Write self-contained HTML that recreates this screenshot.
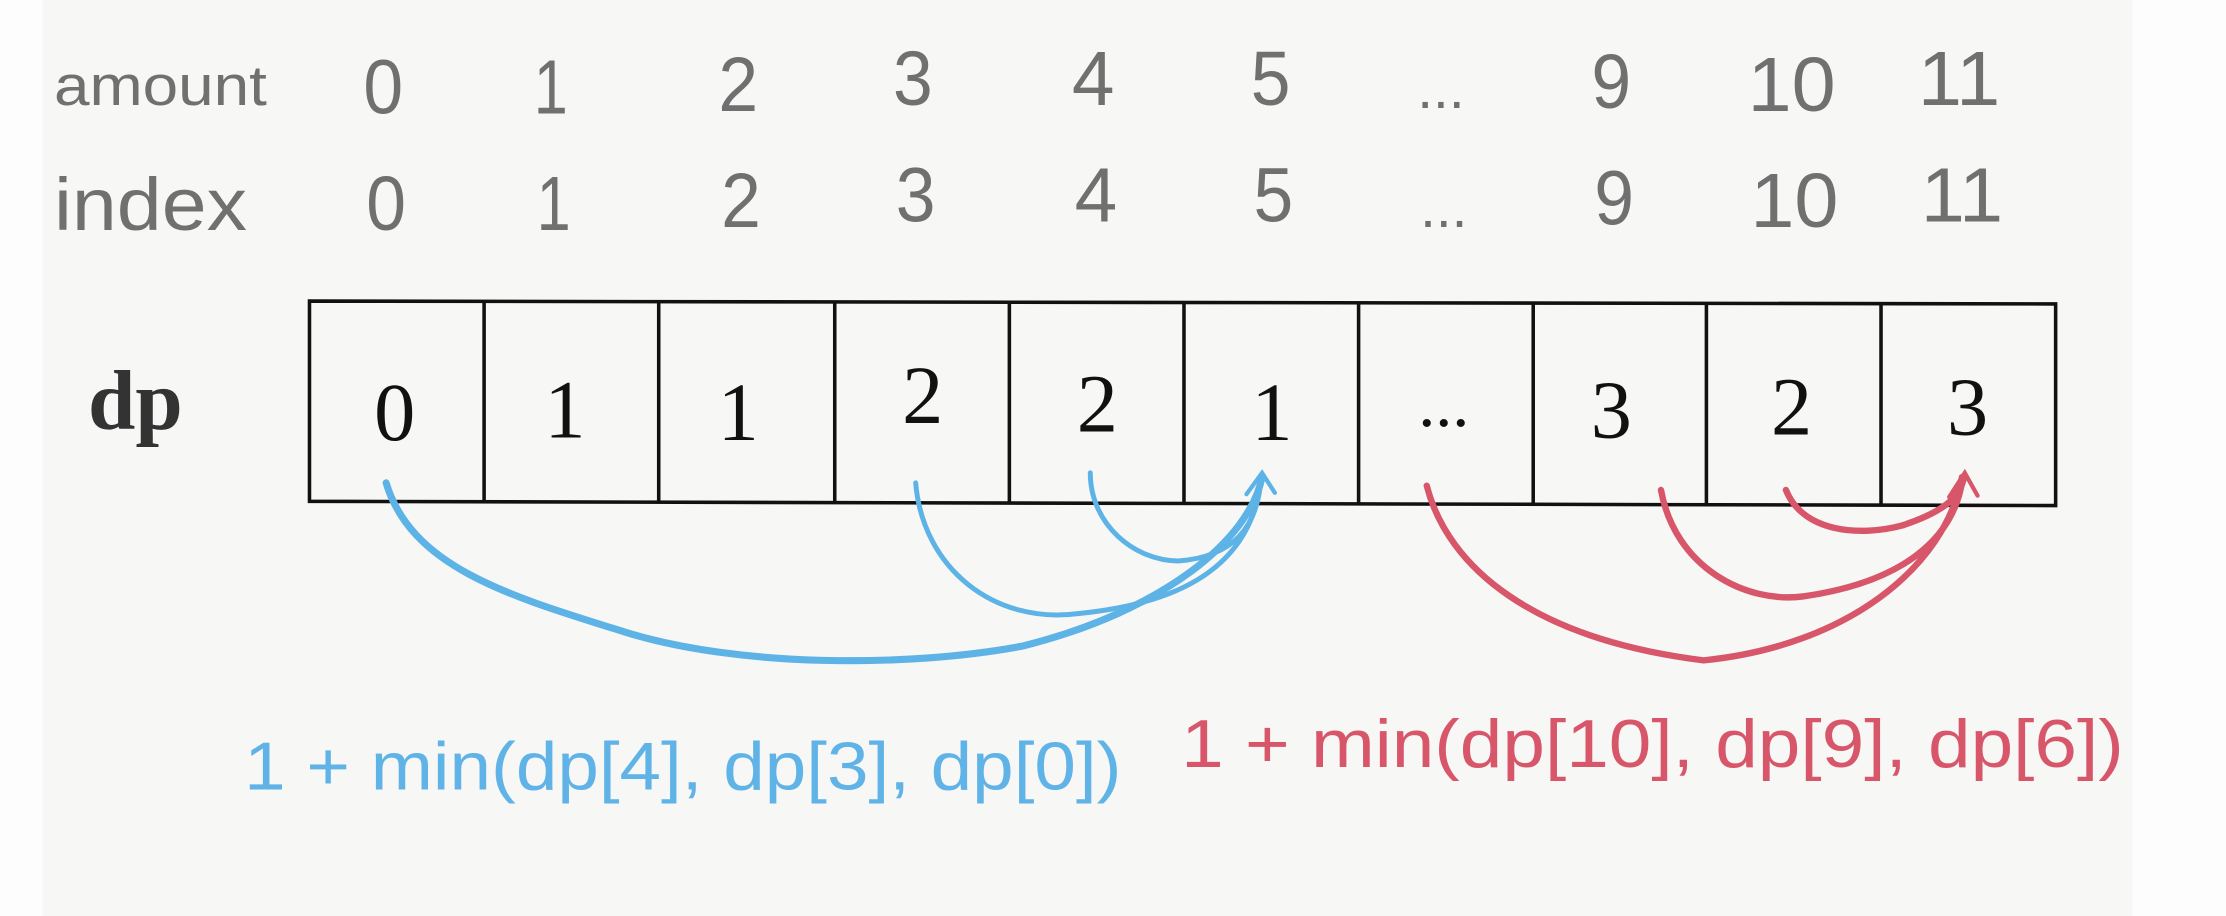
<!DOCTYPE html>
<html><head><style>
html,body{margin:0;padding:0;background:#fff;}
svg{display:block}
</style></head><body>
<svg width="2226" height="916" viewBox="0 0 1568 645" preserveAspectRatio="none" xmlns="http://www.w3.org/2000/svg">
<rect x="0" y="0" width="1568" height="645" fill="#fdfdfd"/>
<rect x="30" y="0" width="1472" height="645" fill="#f7f7f6"/>
<g font-family="Liberation Sans, sans-serif" fill="#707070">
<text x="38" y="74" font-size="40" textLength="150" lengthAdjust="spacingAndGlyphs">amount</text>
<text x="38" y="162" font-size="52" textLength="136" lengthAdjust="spacingAndGlyphs">index</text>
<g font-size="54" text-anchor="middle">
<text x="270" y="80" textLength="28" lengthAdjust="spacingAndGlyphs">0</text><text x="388" y="80" textLength="24" lengthAdjust="spacingAndGlyphs">1</text><text x="520" y="78" textLength="28" lengthAdjust="spacingAndGlyphs">2</text><text x="643" y="74" textLength="28" lengthAdjust="spacingAndGlyphs">3</text><text x="770" y="74" textLength="30" lengthAdjust="spacingAndGlyphs">4</text><text x="895" y="74" textLength="28" lengthAdjust="spacingAndGlyphs">5</text><text x="1015" y="76" font-size="40">...</text><text x="1135" y="76" textLength="28" lengthAdjust="spacingAndGlyphs">9</text><text x="1262" y="78" textLength="62" lengthAdjust="spacingAndGlyphs">10</text><text x="1380" y="74" textLength="58" lengthAdjust="spacingAndGlyphs">11</text>
<text x="272" y="162" textLength="28" lengthAdjust="spacingAndGlyphs">0</text><text x="390" y="162" textLength="24" lengthAdjust="spacingAndGlyphs">1</text><text x="522" y="160" textLength="28" lengthAdjust="spacingAndGlyphs">2</text><text x="645" y="156" textLength="28" lengthAdjust="spacingAndGlyphs">3</text><text x="772" y="156" textLength="30" lengthAdjust="spacingAndGlyphs">4</text><text x="897" y="156" textLength="28" lengthAdjust="spacingAndGlyphs">5</text><text x="1017" y="160" font-size="40">...</text><text x="1137" y="158" textLength="28" lengthAdjust="spacingAndGlyphs">9</text><text x="1264" y="160" textLength="62" lengthAdjust="spacingAndGlyphs">10</text><text x="1382" y="156" textLength="58" lengthAdjust="spacingAndGlyphs">11</text>
</g></g>
<text x="62" y="302" font-family="Liberation Serif, serif" font-weight="bold" font-size="60" fill="#333">dp</text>
<g fill="none" stroke="#111" stroke-width="2.5">
<path d="M218 212 L1448 214 L1448 356 L218 353 Z"/>
<path d="M341 212V354M464 212V354M588 212V354M711 213V355M834 213V355M957 213V355M1080 213V355M1202 214V356M1325 214V356"/>
</g>
<g font-family="Liberation Serif, serif" font-size="58" fill="#111" text-anchor="middle">
<text x="278" y="310">0</text><text x="398" y="308">1</text><text x="520" y="310">1</text><text x="650" y="298">2</text><text x="773" y="304">2</text><text x="896" y="310">1</text><text x="1017" y="300" font-size="48">...</text><text x="1135" y="308">3</text><text x="1262" y="306">2</text><text x="1386" y="306">3</text>
</g>
<g fill="none" stroke="#5eb3e6" stroke-linecap="round">
<path d="M272 340 C290 400 360 420 440 445 C520 470 640 470 720 455 C820 430 880 380 889 336" stroke-width="5"/>
<path d="M645 340 C650 400 700 440 760 432 C830 425 880 400 888 340" stroke-width="3.5"/>
<path d="M768 333 C768 370 800 395 830 395 C870 392 885 370 888 340" stroke-width="3.5"/>
<path d="M878 348 L889 333 L898 347" stroke-width="3"/>
</g>
<g fill="none" stroke="#d8566a" stroke-linecap="round">
<path d="M1005 342 C1020 400 1080 450 1200 465 C1300 455 1370 400 1382 336" stroke-width="4.5"/>
<path d="M1170 345 C1180 400 1230 425 1270 420 C1340 410 1375 380 1382 340" stroke-width="4.5"/>
<path d="M1258 345 C1270 375 1310 378 1340 370 C1370 360 1380 350 1383 338" stroke-width="4.5"/>
<path d="M1373 350 L1384 333 L1393 349" stroke-width="3"/>
</g>
<text x="172" y="556" font-family="Liberation Sans, sans-serif" font-size="48" fill="#5fb3e6" textLength="618" lengthAdjust="spacingAndGlyphs">1 + min(dp[4], dp[3], dp[0])</text>
<text x="832" y="540" font-family="Liberation Sans, sans-serif" font-size="48" fill="#d8566a" textLength="664" lengthAdjust="spacingAndGlyphs">1 + min(dp[10], dp[9], dp[6])</text>
</svg>
</body></html>
